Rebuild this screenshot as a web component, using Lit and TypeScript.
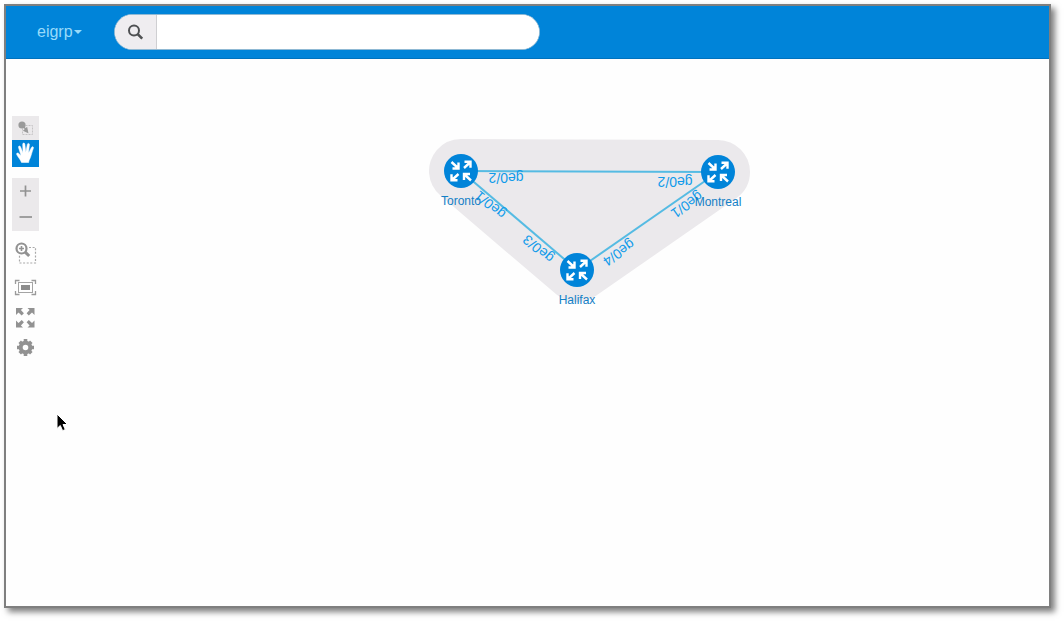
import { LitElement, html, svg, css } from "lit";
import { customElement, state } from "lit/decorators.js";

interface TopologyNode {
  name: string;
  x: number;
  y: number;
}

interface PortLabel {
  text: string;
  x: number;
  y: number;
  angle: number;
}

const NODES: TopologyNode[] = [
  { name: "Toronto", x: 401, y: 112 },
  { name: "Montreal", x: 658, y: 113 },
  { name: "Halifax", x: 517, y: 211 },
];

const LINKS = [
  [0, 1],
  [0, 2],
  [1, 2],
];

const PORTS: PortLabel[] = [
  { text: "ge0/2", x: 446, y: 119, angle: 180 },
  { text: "ge0/2", x: 615, y: 123, angle: 180 },
  { text: "ge0/1", x: 430, y: 146, angle: 220 },
  { text: "ge0/3", x: 478, y: 190, angle: 220 },
  { text: "ge0/1", x: 627, y: 146, angle: 145 },
  { text: "ge0/4", x: 559, y: 194, angle: 145 },
];

const ICONS = {
  select: svg`
    <rect x="10.5" y="9.5" width="10" height="9" fill="none" stroke="#c4c3c4" stroke-dasharray="2 1"/>
    <circle cx="10" cy="9" r="3.600" fill="#9a9a9a"/>
    <path d="M11 10l3 3.500M15.500 16l-3.300-1.500 2.500-2.300z" fill="#9a9a9a" stroke="#9a9a9a" stroke-width="1.400"/>`,
  hand: svg`
    <path d="M9.500 22.500C8.500 19.500 5.300 16.300 4.600 14.300c-.3-1.300 1.200-1.700 2.100-.9l2.300 2.200L6.500 7.500c-.4-1.700 1.500-2.200 2-.7l2.500 6L10.700 4.300c0-1.700 2-1.700 2.200 0l.9 8 1.500-7.900c.4-1.600 2.300-1.200 2.100.4l-.9 8.200 3-5.600c.8-1.400 2.500-.6 1.900.9-1.400 3.700-2 6.500-3 9.200-.6 1.700-1.600 2.700-1.700 5z" fill="#fff" stroke="#fff" stroke-width=".5" stroke-linejoin="round"/>`,
  plus: svg`<path d="M13.500 7.500v11M8 13h11" stroke="#929292" stroke-width="1.700"/>`,
  minus: svg`<path d="M7.500 12h12.500" stroke="#929292" stroke-width="1.700"/>`,
  area: svg`
    <path d="M17 16.500h6.500v15.500h-16v-8" fill="none" stroke="#a8a8a8" stroke-width="1.200" stroke-dasharray="2 1.600"/>
    <circle cx="9.500" cy="17.500" r="5" fill="#fff" stroke="#929292" stroke-width="2.200"/>
    <path d="M9.500 15v5M7 17.500h5" stroke="#929292" stroke-width="1.600"/>
    <path d="M13.200 21.200l4 3.800" stroke="#929292" stroke-width="3"/>`,
  fit: svg`
    <path d="M3.500 11V7.500H7.500M19.500 7.500h4V11M23.500 18v3.500h-4M7.500 21.500h-4V18" fill="none" stroke="#9a9a9a" stroke-width="1.300"/>
    <rect x="6.500" y="9.500" width="14" height="10" fill="none" stroke="#a4a4a4"/>
    <rect x="9" y="12" width="9" height="5" fill="#8c8c8c"/>`,
  expand: svg`
    <g fill="#929292">
      <path d="M4 5h7L8.900 7l3 3.200-2.200 2.200-3.200-3L4 12z"/>
      <path d="M22.500 5h-7l2.100 2-3 3.200 2.200 2.200 3.200-3 2.500 2.600z"/>
      <path d="M4 24.500h7l-2.100-2 3-3.200-2.200-2.200-3.200 3L4 17.500z"/>
      <path d="M22.500 24.500h-7l2.100-2-3-3.200 2.200-2.200 3.200 3 2.500-2.600z"/>
    </g>`,
  gear: svg`
    <circle cx="13.500" cy="14.500" r="4.800" fill="none" stroke="#929292" stroke-width="4"/>
    <g stroke="#929292" stroke-width="3.600">
      <path d="M13.500 6v3M13.500 20v3M5 14.500h3M19 14.500h3"/>
      <path d="M7.700 8.700l2 2M17.300 18.300l2 2M19.300 8.700l-2 2M9.700 18.300l-2 2"/>
    </g>`,
};

@customElement("topology-canvas")
export class TopologyCanvas extends LitElement {
  static styles = css`
    :host {
      display: block;
      min-width: 0;
      position: relative;
      font-family: "Liberation Sans", Arial, sans-serif;
    }
    .map {
      display: block;
      width: 100%;
      height: 100%;
      overflow: visible;
    }
    .hull {
      fill: #ebe9ec;
      stroke: #ebe9ec;
      stroke-width: 64px;
      stroke-linejoin: round;
    }
    .link {
      stroke: #55bbe3;
      stroke-width: 2px;
    }
    .disc {
      fill: #0084d9;
    }
    .arrows {
      fill: none;
      stroke: #fff;
      stroke-width: 2.4px;
    }
    .name {
      fill: #1480c6;
      font-size: 12px;
      text-anchor: middle;
    }
    .port {
      fill: #109bea;
      font-size: 14px;
      text-anchor: middle;
    }
  `;

  render() {
    return html`
      <svg class="map" role="img" aria-label="Network topology">
        <polygon class="hull" points=${NODES.map((n) => `${n.x},${n.y}`).join(" ")}></polygon>
        ${LINKS.map(
          ([a, b]) => svg`<line class="link" x1=${NODES[a].x} y1=${NODES[a].y} x2=${NODES[b].x} y2=${NODES[b].y}></line>`
        )}
        ${PORTS.map(
          (p) => svg`<text class="port" dy="5" transform="translate(${p.x} ${p.y}) rotate(${p.angle})">${p.text}</text>`
        )}
        ${NODES.map(
          (n) => svg`
          <g transform="translate(${n.x} ${n.y})">
            <circle class="disc" r="17"></circle>
            <path class="arrows" d="M-9.500-9l6.500 6M-8.500-2.500h6v-6M3-3l6.500-6M3.500-9.200h6v6M-2.500 3l-6.500 6M-3.500 9.200h-6v-6M10 9.500l-6.500-6M9 3H3v6"></path>
            <text class="name" y="34">${n.name}</text>
          </g>`
        )}
      </svg>
    `;
  }
}

@customElement("app-root")
export class AppRoot extends LitElement {
  @state() private mode = "pan";

  static styles = css`
    :host {
      display: flex;
      box-sizing: border-box;
      height: 100vh;
      padding: 4px 13px 13px 4px;
      background: #fff;
      font-family: "Liberation Sans", Arial, sans-serif;
    }
    .frame {
      flex: 1;
      display: flex;
      flex-direction: column;
      min-width: 0;
      border: 2px solid #7f7f7f;
      background: #fefefe;
      box-shadow: 4px 4px 6px rgba(0, 0, 0, 0.5);
    }
    .bar {
      display: flex;
      align-items: center;
      box-sizing: border-box;
      height: 53px;
      padding: 0 31px;
      gap: 32px;
      background: #0084d9;
      border-bottom: 1px solid #0072bd;
    }
    button {
      margin: 0;
      padding: 0;
      border: 0;
      background: none;
      font: inherit;
      cursor: pointer;
    }
    .network {
      display: flex;
      align-items: center;
      gap: 1px;
      color: #98dbfa;
      font-size: 16px;
      line-height: 20px;
    }
    .caret {
      border: 4px solid transparent;
      border-top-color: #98dbfa;
      border-bottom: 0;
    }
    .search {
      display: flex;
      flex: 0 1 424px;
      height: 34px;
      min-width: 0;
      overflow: hidden;
      border: 1px solid #8fb9d4;
      border-radius: 18px;
      background: #fff;
    }
    .go {
      display: grid;
      place-items: center;
      flex: 0 0 42px;
      background: #efedf0;
      border-right: 1px solid #cfcfd2;
    }
    .query {
      flex: 1;
      min-width: 0;
      border: 0;
      padding: 0 12px;
      outline: none;
      background: #fff;
      font: inherit;
      font-size: 16px;
    }
    .work {
      flex: 1;
      min-height: 0;
      display: grid;
      grid-template-columns: 54px minmax(0, 1fr);
      position: relative;
    }
    .tools {
      display: flex;
      flex-direction: column;
      width: 27px;
      padding: 57px 6px 0;
    }
    .group {
      display: flex;
      flex-direction: column;
      margin-bottom: 11px;
      background: #ebe9eb;
    }
    .group + .group {
      margin-bottom: 0;
    }
    .tool,
    .tool svg {
      display: block;
    }
    .active {
      background: #0084d9;
    }
    .pointer {
      position: absolute;
      left: 50px;
      top: 354px;
      pointer-events: none;
    }
  `;

  private tool(icon: keyof typeof ICONS, label: string, height: number, active = false) {
    return html`
      <button
        class="tool ${active ? "active" : ""}"
        aria-label=${label}
        @click=${() => {
          if (icon === "hand") this.mode = "pan";
        }}
      >
        <svg width="27" height=${height} aria-hidden="true">${ICONS[icon]}</svg>
      </button>
    `;
  }

  render() {
    return html`
      <div class="frame">
        <header class="bar">
          <button class="network" aria-haspopup="menu">eigrp<span class="caret"></span></button>
          <form class="search" role="search" @submit=${(e: Event) => e.preventDefault()}>
            <button class="go" aria-label="Search">
              <svg width="18" height="18" fill="none" stroke="#4f5153" aria-hidden="true">
                <circle cx="8" cy="7.500" r="5" stroke-width="2"></circle>
                <path d="M11.700 11.200l4.500 4.500" stroke-width="2.600"></path>
              </svg>
            </button>
            <input class="query" type="text" aria-label="Search the network" />
          </form>
        </header>
        <main class="work">
          <nav class="tools" aria-label="Topology tools">
            <div class="group">
              ${this.tool("select", "Select nodes", 24)}
              ${this.tool("hand", "Move", 27, this.mode === "pan")}
            </div>
            <div class="group">
              ${this.tool("plus", "Zoom in", 27)} ${this.tool("minus", "Zoom out", 26)}
            </div>
            ${this.tool("area", "Zoom by selection", 42)} ${this.tool("fit", "Fit stage", 30)}
            ${this.tool("expand", "Full screen", 30)} ${this.tool("gear", "Settings", 30)}
          </nav>
          <topology-canvas></topology-canvas>
          <svg class="pointer" width="14" height="20" aria-hidden="true">
            <path d="M1 1v14.500l3.300-3 2.300 5.200 2.700-1.200-2.300-5h4.500z" fill="#000" stroke="#fff"></path>
          </svg>
        </main>
      </div>
    `;
  }
}
